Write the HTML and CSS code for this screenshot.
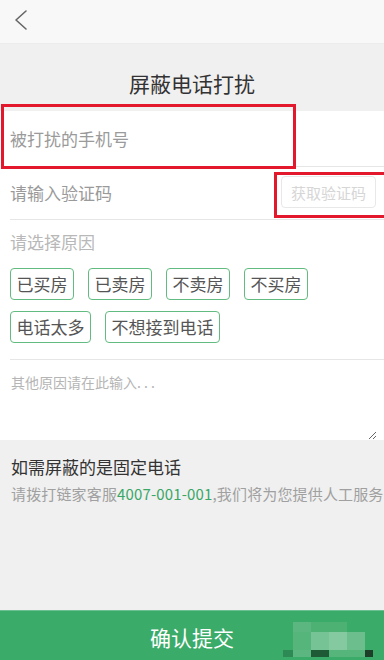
FILE: index.html
```html
<!DOCTYPE html>
<html lang="zh-CN">
<head>
<meta charset="utf-8">
<title>屏蔽电话打扰</title>
<link rel="stylesheet" href="styles.css">
</head>
<body>
<div class="page">
  <header class="topbar">
    <svg class="back" width="16" height="22" viewBox="0 0 16 22"><polyline points="12,2 2,11 12,20" fill="none" stroke="#666" stroke-width="1.6" stroke-linecap="round" stroke-linejoin="round"/></svg>
  </header>
  <div class="title-wrap"><h1 class="title">屏蔽电话打扰</h1></div>
  <section class="form">
    <div class="row row-phone"><span class="ph">被打扰的手机号</span></div>
    <div class="row row-code"><span class="ph">请输入验证码</span><button class="code-btn">获取验证码</button></div>
    <div class="reasons">
      <div class="reason-label">请选择原因</div>
      <div class="tags">
        <span class="tag">已买房</span><span class="tag">已卖房</span><span class="tag">不卖房</span><span class="tag">不买房</span>
        <span class="tag">电话太多</span><span class="tag">不想接到电话</span>
      </div>
    </div>
    <textarea class="other" placeholder="其他原因请在此输入. . ."></textarea>
    <div class="mark mark-phone"></div>
    <div class="mark mark-code"></div>
  </section>
  <section class="note">
    <div class="note-title">如需屏蔽的是固定电话</div>
    <div class="note-text">请拨打链家客服<span class="green">4007-001-001</span>,我们将为您提供人工服务</div>
  </section>
  <footer class="submit">
    <span>确认提交</span>
    <div class="wm">
      <i></i><i class="c1"></i><i class="c2"></i><i class="c2"></i><i></i><i></i>
      <i></i><i class="c3"></i><i class="c4"></i><i class="c5"></i><i class="c6"></i><i></i>
      <i class="d1"></i><i class="c1"></i><i class="d2"></i><i class="c3"></i><i class="c3"></i><i class="d3"></i>
    </div>
  </footer>
</div>
</body>
</html>
```
FILE: styles.css
```css
* { box-sizing: border-box; }
html, body { margin: 0; padding: 0; }
body {
  font-family: "Noto Sans CJK SC", "Noto Sans", sans-serif;
  background: #f0f0f0;
  width: 384px;
  height: 660px;
  overflow: hidden;
}
.page { position: relative; height: 660px; }
.topbar {
  height: 44px;
  background: #f8f8f8;
  border-bottom: 1px solid #ececec;
  display: flex;
  align-items: center;
  padding-left: 14px;
}
.back { display: block; margin-top: -4px; }
.title-wrap {
  height: 67px;
  display: flex;
  align-items: center;
  justify-content: center;
}
.title {
  margin: 10px 0 0 0;
  font-size: 21px;
  font-weight: normal;
  color: #333;
  line-height: 28px;
}
.form {
  position: relative;
  background: #fff;
  padding-left: 10px;
}
.row {
  display: flex;
  align-items: center;
  border-bottom: 1px solid #e6e6e6;
}
.row-phone { height: 56px; padding-top: 1px; }
.row-code { height: 53px; justify-content: space-between; padding-right: 8px; }
.ph { font-size: 17px; color: #9a9a9a; line-height: 24px; }
.code-btn {
  width: 95px;
  height: 32px;
  border: 1px solid #e8e8e8;
  border-radius: 4px;
  background: #fff;
  color: #d6d6d6;
  font-family: inherit;
  font-size: 15px;
  padding: 0;
  margin-top: -2px;
}
.reasons {
  padding: 10px 0 16px;
  border-bottom: 1px solid #e6e6e6;
}
.reason-label {
  font-size: 17px;
  line-height: 24px;
  color: #b8b8b8;
  margin-bottom: 14px;
}
.tags {
  display: flex;
  flex-wrap: wrap;
  column-gap: 14px;
  row-gap: 11px;
  padding-right: 60px;
}
.tag {
  height: 32px;
  border: 1px solid #62bb80;
  border-radius: 4px;
  padding: 0 5.5px;
  font-size: 17px;
  line-height: 30px;
  color: #555;
}
.other {
  display: block;
  width: 367px;
  height: 80px;
  border: none;
  outline: none;
  padding: 12px 0 0 1px;
  margin: 0;
  font-family: inherit;
  font-size: 14px;
  line-height: 20px;
  color: #333;
  background: #fff;
}
.other::placeholder { color: #b5b5b5; }
.mark {
  position: absolute;
  border: 3px solid #e3182d;
}
.mark-phone { left: 1px; top: -7px; width: 295px; height: 65px; }
.mark-code { left: 274px; top: 61px; width: 114px; height: 46px; }
.note { padding: 16px 10px 0 11px; }
.note-title { font-size: 17px; line-height: 22px; color: #333; }
.note-text {
  margin-top: 5px;
  font-size: 15px;
  line-height: 22px;
  color: #a0a0a0;
  white-space: nowrap;
  letter-spacing: 0.15px;
}
.green { color: #3aa767; }
.submit {
  position: absolute;
  left: 0;
  right: 0;
  bottom: 0;
  height: 50px;
  background: #3bab6a;
  border-top: 1px solid #6cc08f;
  display: flex;
  align-items: center;
  justify-content: center;
  color: #fff;
  font-size: 21px;
}
.submit span { margin-top: 2px; }
.wm {
  position: absolute;
  left: 283px;
  top: 11px;
  display: grid;
  grid-template-columns: 10px 18px 18px 18px 18px 8px;
  grid-template-rows: 10px 18px 7px;
}
.wm i { display: block; }
.wm .c1 { background: #5bb77f; }
.wm .c2 { background: #4db173; }
.wm .c3 { background: #55b57b; }
.wm .c4 { background: #76c395; }
.wm .c5 { background: #85c9a0; }
.wm .c6 { background: #6cbf8c; }
.wm .d1 { background: #2e8a55; }
.wm .d2 { background: #1f5a37; }
.wm .d3 { background: #1d3f2a; }
```
